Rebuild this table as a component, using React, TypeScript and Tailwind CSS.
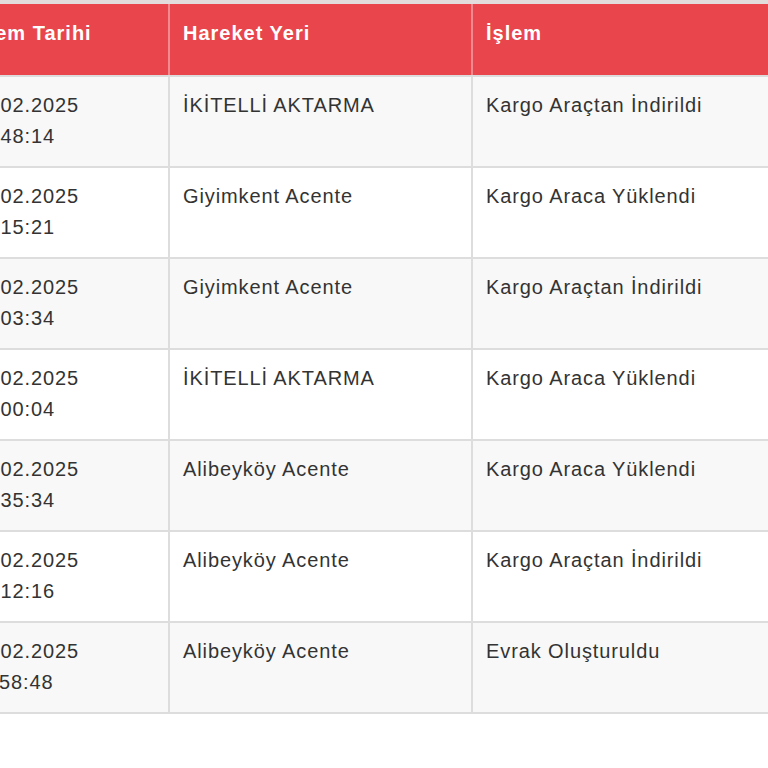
const rows = [
  { date: "18.02.2025", time: "14:48:14", place: "İKİTELLİ AKTARMA", action: "Kargo Araçtan İndirildi" },
  { date: "18.02.2025", time: "10:15:21", place: "Giyimkent Acente", action: "Kargo Araca Yüklendi" },
  { date: "17.02.2025", time: "19:03:34", place: "Giyimkent Acente", action: "Kargo Araçtan İndirildi" },
  { date: "17.02.2025", time: "08:00:04", place: "İKİTELLİ AKTARMA", action: "Kargo Araca Yüklendi" },
  { date: "16.02.2025", time: "18:35:34", place: "Alibeyköy Acente", action: "Kargo Araca Yüklendi" },
  { date: "16.02.2025", time: "13:12:16", place: "Alibeyköy Acente", action: "Kargo Araçtan İndirildi" },
  { date: "16.02.2025", time: "11:58:48", place: "Alibeyköy Acente", action: "Evrak Oluşturuldu" },
];

export default function App() {
  return (
    <div className="w-[768px] h-[768px] overflow-hidden bg-white font-['Liberation_Sans',Arial,sans-serif]">
      {/* tablo yatayda kaydirilmis, ilk sutun kismen gorunuyor */}
      <div className="ml-[-44px] border-t-[4px] border-[#e2dcdc]">
        <div className="flex bg-[#e8464c] text-white font-bold text-[20px] leading-[31px] tracking-[1px] border-b-2 border-[#dcdcdc]">
          <div className="w-[214px] shrink-0 pl-[14px] pr-[14px] pt-[14px] h-[71px] border-r-2 border-[#f08a8e]">İşlem Tarihi</div>
          <div className="w-[303px] shrink-0 pl-[13px] pr-[14px] pt-[14px] h-[71px] border-r-2 border-[#f08a8e]">Hareket Yeri</div>
          <div className="flex-1 pl-[13px] pt-[14px] h-[71px]">İşlem</div>
        </div>
        {rows.map((r, i) => (
          <div
            key={i}
            className={`flex text-[20px] leading-[31px] tracking-[0.9px] text-[#333] border-b-2 border-[#dddddd] ${i % 2 === 0 ? "bg-[#f8f8f8]" : "bg-white"}`}
          >
            <div className="w-[214px] shrink-0 pl-[14px] pr-[14px] pt-[13px] pb-[14px] border-r-2 border-[#dddddd]">
              <div>{r.date}</div>
              <div>{r.time}</div>
            </div>
            <div className="w-[303px] shrink-0 pl-[13px] pr-[14px] pt-[13px] pb-[14px] border-r-2 border-[#dddddd]">{r.place}</div>
            <div className="flex-1 pl-[13px] pt-[13px] pb-[14px]">{r.action}</div>
          </div>
        ))}
      </div>
    </div>
  );
}
